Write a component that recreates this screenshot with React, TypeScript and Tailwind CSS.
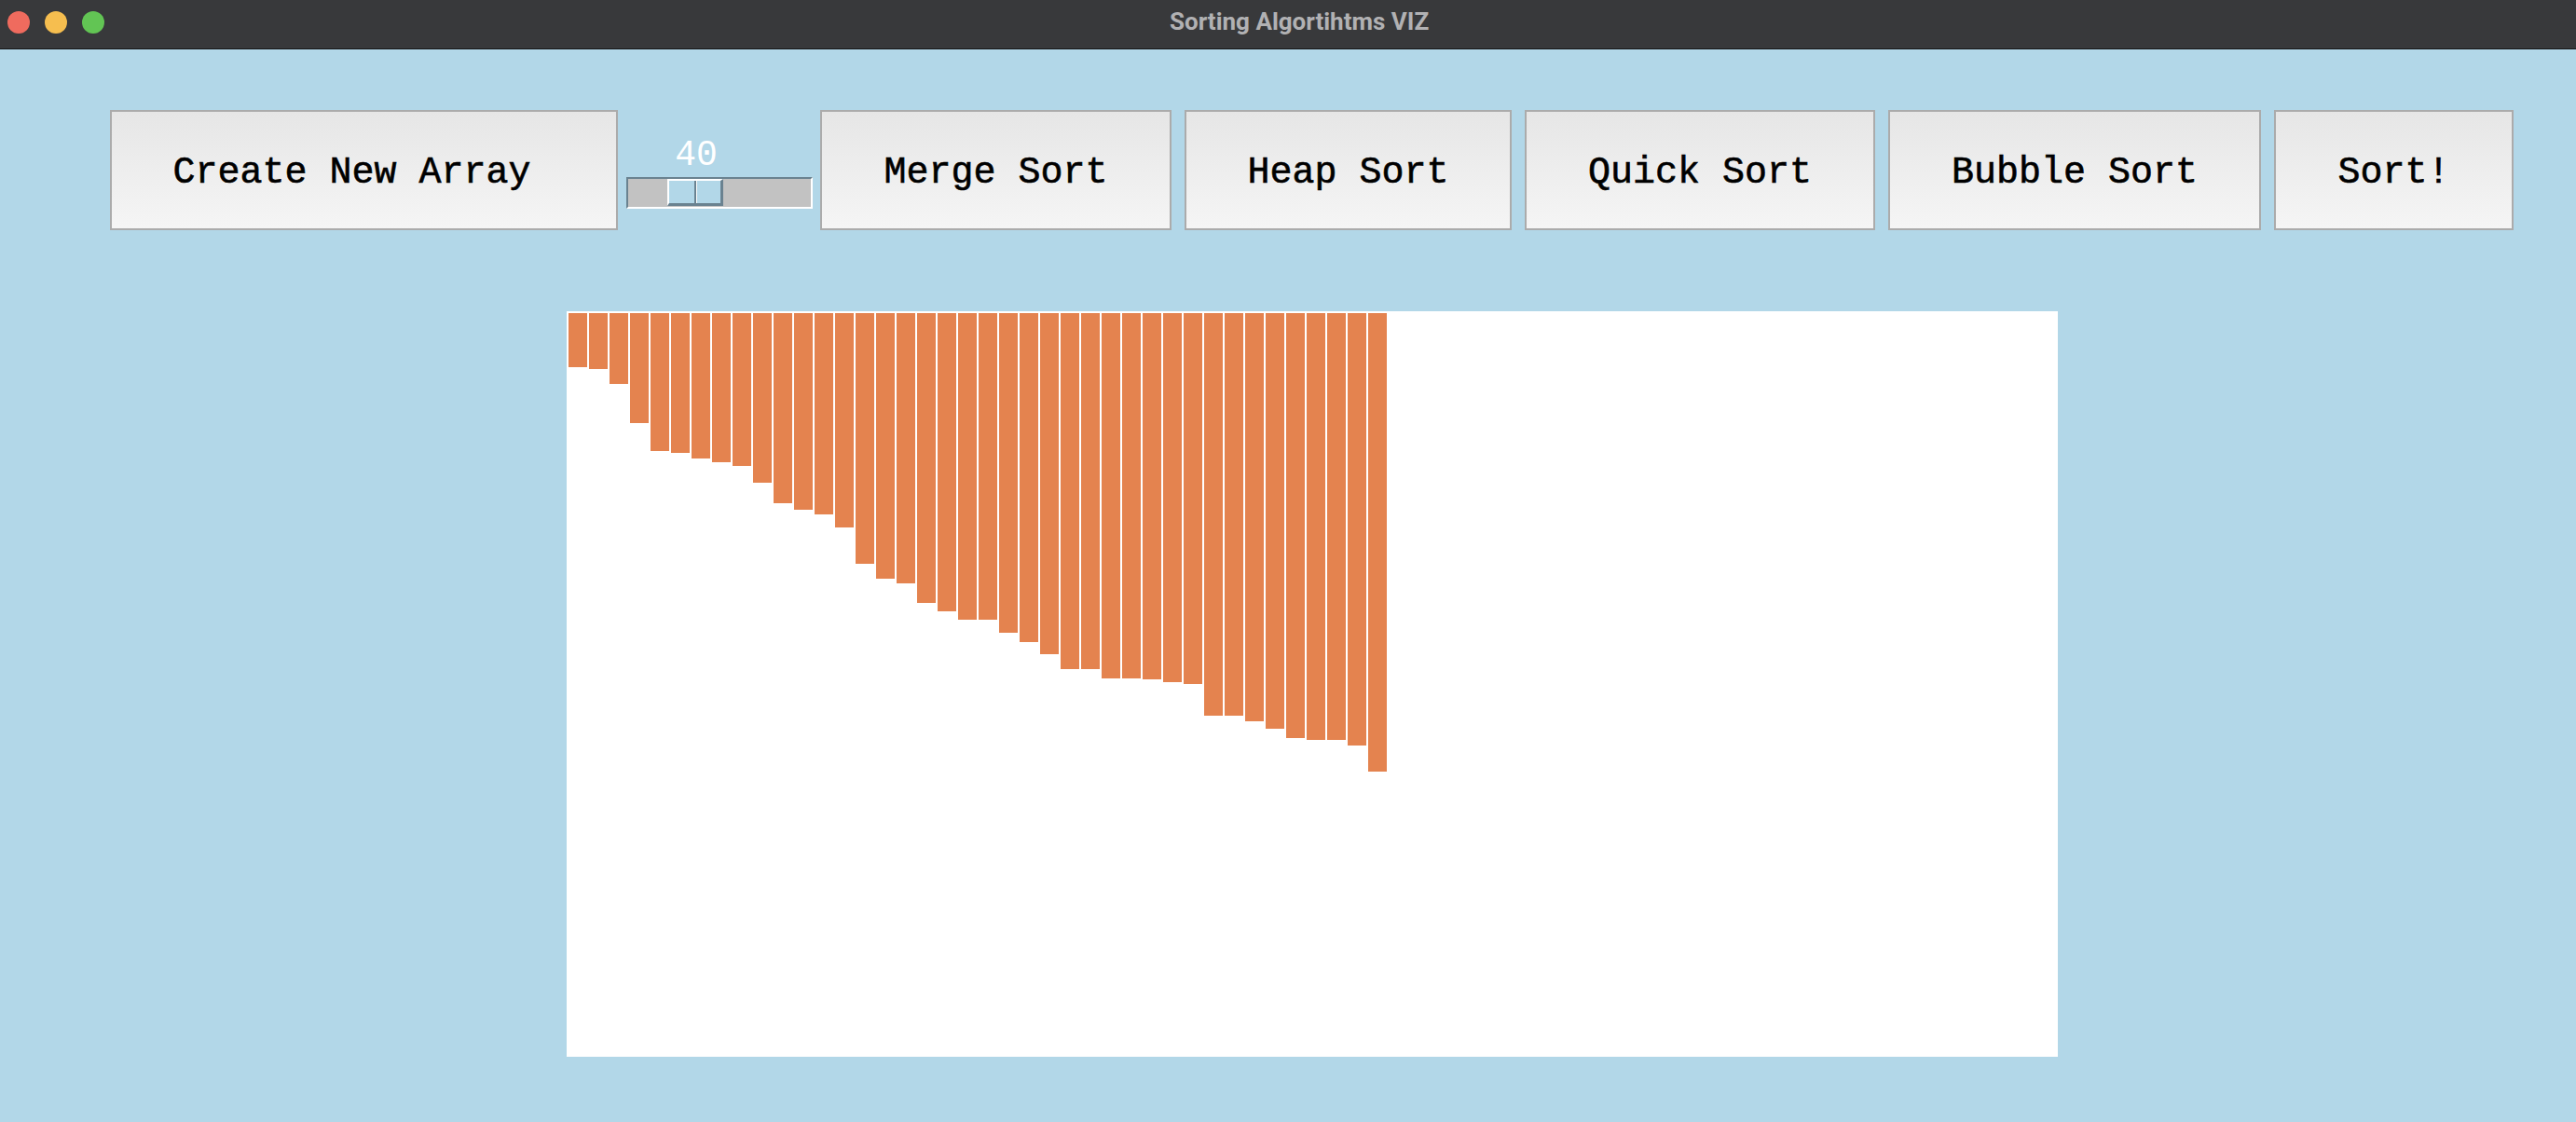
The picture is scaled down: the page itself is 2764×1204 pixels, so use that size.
import React from "react";

// heights of the 40 bars, in px, measured off the canvas top
const BARS = [
  58, 60, 76, 118, 148, 150, 156, 160, 164, 182,
  204, 211, 216, 230, 269, 285, 290, 311, 320, 329,
  329, 343, 353, 366, 382, 382, 392, 392, 393, 396,
  398, 432, 432, 438, 446, 456, 458, 458, 464, 492,
];

const BUTTONS = [
  { label: "Merge Sort", w: "w-[377px]" },
  { label: "Heap Sort", w: "w-[351px]" },
  { label: "Quick Sort", w: "w-[376px]" },
  { label: "Bubble Sort", w: "w-[400px]" },
  { label: "Sort!", w: "w-[257px]" },
];

const mono = { fontFamily: '"Liberation Mono", "Courier New", monospace' };

function Btn({ label, w, extra = "" }: { label: string; w: string; extra?: string }) {
  return (
    <button
      className={`${w} ${extra} h-[129px] pt-[6px] flex items-center justify-center border-2 border-[#ababab] bg-gradient-to-b from-[#e6e6e6] to-[#f5f5f5] text-[40px] leading-none text-black [-webkit-text-stroke:0.6px_#000]`}
      style={mono}
    >
      {label}
    </button>
  );
}

function SizeSlider({ value }: { value: number }) {
  return (
    <div className="w-[200px] h-[129px] flex flex-col">
      <div
        className="mt-[30px] ml-[51px] w-[48px] text-[38px] leading-[38px] text-white text-center"
        style={mono}
      >
        {value}
      </div>
      <div className="mt-[4px] h-[34px] flex bg-[#c2c2c2] border-t-2 border-l-2 border-[#6a8290] border-r-2 border-r-white border-b-2 border-b-white">
        <div className="ml-[42px] w-[60px] h-[29px] flex bg-[#b2d7e8] border-t-2 border-l-2 border-white border-r-[3px] border-r-[#6a8290] border-b-[3px] border-b-[#6a8290]">
          <div className="w-[27px]" />
          <div className="w-[2px] bg-[#6a8290]" />
          <div className="w-[1px] bg-white" />
        </div>
      </div>
    </div>
  );
}

export default function App() {
  return (
    <div className="w-[2764px] h-[1204px] bg-[#b2d7e8] overflow-hidden flex flex-col">
      <div className="h-[53px] shrink-0 bg-[#38393b] border-b border-[#161616] flex items-start">
        <div className="flex gap-[16px] pl-[8px] pt-[12px]">
          <div className="w-[24px] h-[24px] rounded-full bg-[#ef6b5e]" />
          <div className="w-[24px] h-[24px] rounded-full bg-[#f6be4f]" />
          <div className="w-[24px] h-[24px] rounded-full bg-[#62c554]" />
        </div>
        <div
          className="ml-[1143px] pt-[7px] text-[26px] leading-[32px] font-bold text-[#b1b1b3]"
          style={{ fontFamily: 'Roboto, "Noto Sans", sans-serif' }}
        >
          Sorting Algortihtms VIZ
        </div>
      </div>

      <div className="flex items-start pl-[118px] pt-[65px]">
        <Btn label="Create New Array" w="w-[545px]" extra="pr-[26px]" />
        <div className="ml-[9px] mr-[8px]">
          <SizeSlider value={40} />
        </div>
        <div className="flex gap-[14px]">
          {BUTTONS.map((b) => (
            <Btn key={b.label} label={b.label} w={b.w} />
          ))}
        </div>
      </div>

      <div className="ml-[608px] mt-[87px] w-[1600px] h-[800px] bg-white flex items-start gap-[2px] pl-[2px] pt-[2px]">
        {BARS.map((h, i) => (
          <div key={i} className="w-[20px] bg-[#e4834f]" style={{ height: h }} />
        ))}
      </div>
    </div>
  );
}
